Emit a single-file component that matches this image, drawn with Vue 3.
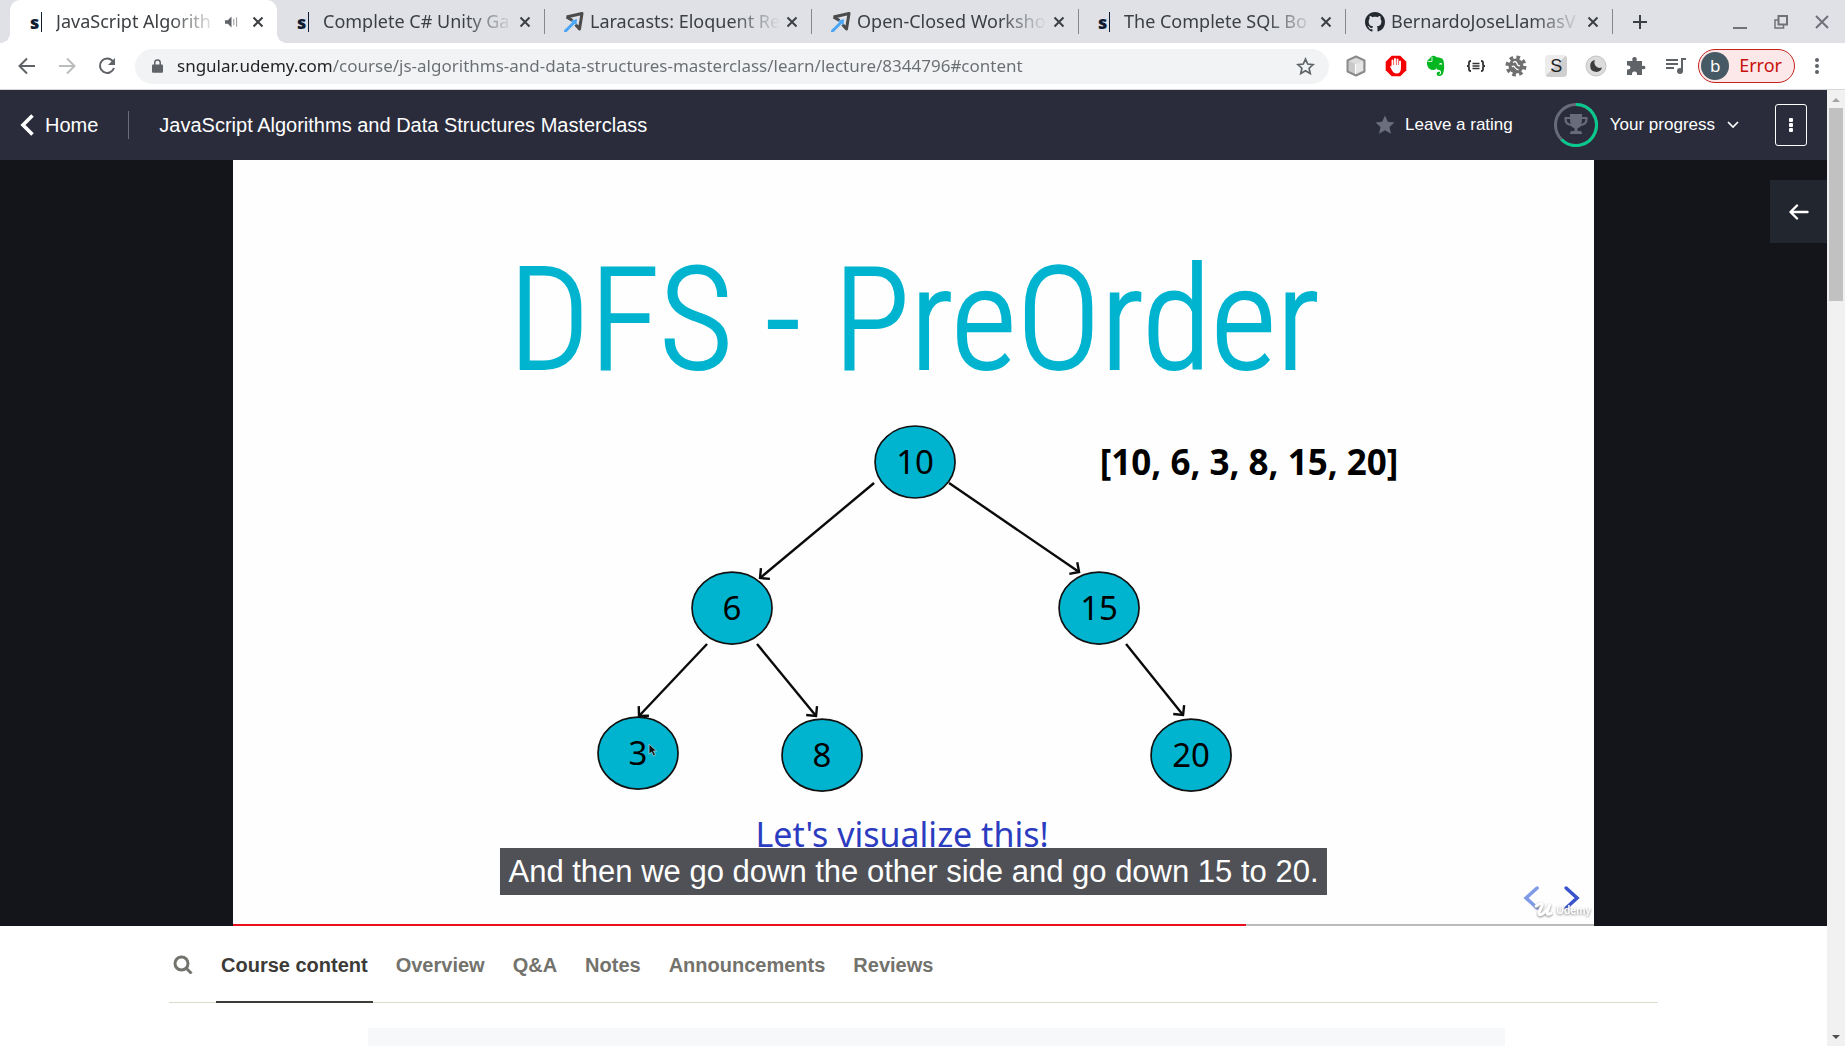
<script setup>
import { ref } from 'vue'

const browserTabs = [
  { title: 'JavaScript Algorith', icon: 'sngular', active: true, audio: true },
  { title: 'Complete C# Unity Ga', icon: 'sngular' },
  { title: 'Laracasts: Eloquent Re', icon: 'laracasts' },
  { title: 'Open-Closed Worksho', icon: 'laracasts' },
  { title: 'The Complete SQL Bo', icon: 'sngular' },
  { title: 'BernardoJoseLlamasV', icon: 'github' },
]

const url = ref('sngular.udemy.com/course/js-algorithms-and-data-structures-masterclass/learn/lecture/8344796#content')

const nodes = [
  { value: 10, x: 682, y: 302 },
  { value: 6, x: 499, y: 448 },
  { value: 15, x: 866, y: 448 },
  { value: 3, x: 405, y: 593 },
  { value: 8, x: 589, y: 595 },
  { value: 20, x: 958, y: 595 },
]

const edges = [
  [641, 323, 527, 418],
  [716, 323, 846, 412],
  [474, 484, 406, 556],
  [524, 484, 583, 556],
  [893, 484, 950, 555],
]

const sections = ['Course content', 'Overview', 'Q&A', 'Notes', 'Announcements', 'Reviews']
const current = ref('Course content')
const progress = 74.4
</script>

<template>
  <div class="browser">
    <header class="tab-strip">
      <div v-for="tab in browserTabs" :key="tab.title" class="tab" :class="{ active: tab.active }">
        <span v-if="tab.icon === 'sngular'" class="fav sngular">s</span>
        <svg v-else-if="tab.icon === 'laracasts'" class="fav" viewBox="0 0 20 20">
          <path d="M2.500 5 18 1.500 15.500 17 11.500 12.500M2.500 5 8.500 8.500" fill="none" stroke="#4b4b4b" stroke-width="3" stroke-linejoin="round" />
          <path d="M13 7 12.500 13 6.500 9z" fill="#4aa5f5" />
          <path d="M9 11.500 1.500 19" stroke="#4aa5f5" stroke-width="3" stroke-dasharray="6 2" stroke-linecap="round" />
        </svg>
        <svg v-else class="fav" viewBox="0 0 16 16">
          <path fill="#24292f" d="M8 0C3.580 0 0 3.580 0 8c0 3.540 2.290 6.530 5.470 7.590.4.070.550-.17.550-.38 0-.19-.01-.82-.01-1.490-2.010.37-2.530-.49-2.690-.94-.09-.23-.48-.94-.82-1.130-.28-.15-.68-.52-.01-.53.630-.01 1.080.580 1.230.820.720 1.210 1.870.870 2.330.660.070-.52.280-.87.510-1.070-1.780-.2-3.640-.89-3.640-3.950 0-.87.310-1.590.820-2.150-.08-.2-.36-1.020.080-2.120 0 0 .67-.21 2.200.820.640-.18 1.320-.27 2-.27s1.360.090 2 .27c1.530-1.040 2.200-.82 2.200-.82.440 1.100.160 1.920.080 2.120.510.560.820 1.270.820 2.150 0 3.070-1.870 3.750-3.650 3.950.290.250.540.730.540 1.480 0 1.070-.01 1.930-.01 2.200 0 .21.150.460.550.380A8.010 8.010 0 0 0 16 8c0-4.420-3.580-8-8-8z" />
        </svg>
        <span class="tab-title">{{ tab.title }}</span>
        <svg v-if="tab.audio" class="audio" viewBox="0 0 14 14">
          <path d="M0 5h3l4-4v12L3 9H0z" fill="#5f6368" />
          <path d="M9.500 3.500v7M12.500 2v10" stroke="#8b8e92" stroke-width="1" />
        </svg>
        <button class="tab-close" aria-label="Close tab">
          <svg viewBox="0 0 12 12"><path d="M1.500 1.500l9 9M10.500 1.500l-9 9" stroke="#3c4043" stroke-width="2" /></svg>
        </button>
      </div>
      <button class="new-tab" aria-label="New tab">
        <svg viewBox="0 0 16 16"><path d="M8 1v14M1 8h14" stroke="#3c4043" stroke-width="2" /></svg>
      </button>
      <div class="window-controls">
        <button aria-label="Minimize"><svg viewBox="0 0 16 16"><path d="M1 14h14" stroke="#707278" stroke-width="2" /></svg></button>
        <button aria-label="Restore"><svg viewBox="0 0 16 16" fill="none" stroke="#707278" stroke-width="2"><path d="M5.500 2h8.500v8.500H5.500z" /><path d="M5.500 6H2v8h8.500v-3.500" stroke-width="1.500" /></svg></button>
        <button aria-label="Close"><svg viewBox="0 0 16 16"><path d="M2 2l12 12M14 2L2 14" stroke="#707278" stroke-width="2" /></svg></button>
      </div>
    </header>

    <div class="toolbar">
      <div class="nav-buttons">
        <button aria-label="Back"><svg viewBox="0 0 18 18" fill="none" stroke="#5f6368" stroke-width="2"><path d="M17 9H2M9 1.500 1.500 9 9 16.500" /></svg></button>
        <button aria-label="Forward"><svg viewBox="0 0 18 18" fill="none" stroke="#babcbe" stroke-width="2"><path d="M1 9h15M9 1.500 16.500 9 9 16.500" /></svg></button>
        <button aria-label="Reload"><svg viewBox="0 0 18 18"><path d="M15 4.500A7.200 7.200 0 1 0 16 11" fill="none" stroke="#5f6368" stroke-width="2" /><path d="M17 1v7h-7z" fill="#5f6368" /></svg></button>
      </div>
      <div class="omnibox">
        <svg class="lock" viewBox="0 0 12 16"><path d="M1 6h10a1 1 0 0 1 1 1v7a1 1 0 0 1-1 1H1a1 1 0 0 1-1-1V7a1 1 0 0 1 1-1z" fill="#5f6368" /><path d="M3 7V4a3 3 0 0 1 6 0v3" fill="none" stroke="#5f6368" stroke-width="1.600" /></svg>
        <input v-model="url" class="url" type="text" aria-label="Address" spellcheck="false" />
        <button class="bookmark" aria-label="Bookmark">
          <svg viewBox="0 0 18 18"><path d="M9 2l2.100 4.700 5.100.5-3.800 3.400 1.100 5L9 13l-4.500 2.600 1.100-5L1.800 7.200l5.100-.5z" fill="none" stroke="#5f6368" stroke-width="1.600" /></svg>
        </button>
      </div>
      <div class="extensions">
        <button aria-label="Cube"><svg viewBox="0 0 22 22"><path d="M11 1.500 19.500 5.500v11L11 20.500 2.500 16.500v-11z" fill="#c9c9c9" stroke="#8b8b8b" stroke-width="2" stroke-linejoin="round" /><path d="M10.500 9 18 6v9.500l-7.500 3.500z" fill="#e6e6e6" /><path d="M4 6 11 3l7 3-7.500 3z" fill="#dcdcdc" /><path d="M10.500 9v10" stroke="#fff" /></svg></button>
        <button aria-label="Ad blocker"><svg viewBox="0 0 22 22"><path d="M6.700.700h8.600l6 6v8.600l-6 6H6.700l-6-6V6.700z" fill="#f40000" /><path d="M7.500 11V5.500M10 10V4M12.500 10V4.500M15 11V6.500" stroke="#fff" stroke-width="1.900" stroke-linecap="round" /><path d="M6.600 10h9.300v3.500c0 3-1.500 5-4.200 5-2.500 0-4-1.500-5-3.800L5 11.500q.8-1 1.600.2z" fill="#fff" /></svg></button>
        <button aria-label="Evernote"><svg viewBox="0 0 22 22"><path d="M2 6 7 1q3-1 4 1l4 .7q3 .5 3.500 3 1.500 7-.2 12-1 3.300-4 3.300c-3 0-3.500-3.800-1-4.300h1.700v2h-1q-.6.700.2.800c1.500.1 2-1.200 1.800-2.700-.2-1.500-2-2-4-2.300l-.6-1.500q-.6 2.200-3 2Q3 15 2 9z" fill="#04b61f" /><path d="M2.500 6.500H7V2" fill="none" stroke="#fff" stroke-width=".8" /><path d="M14.500 9.500q1-1.800 2.500-.1" fill="none" stroke="#fff" stroke-width="1.200" /></svg></button>
        <button aria-label="JSON"><svg viewBox="0 0 22 22" fill="none" stroke="#333" stroke-width="1.800"><path d="M6 6Q3.500 6 4 8.500T2 11q2.500 0 2 2.500T6 16M16 6q2.500 0 2 2.500t2 2.500q-2.500 0-2 2.500T16 16" /><path d="M7.500 8.500h7M7.500 11h7M7.500 13.500h7" stroke-width="1.300" /></svg></button>
        <button aria-label="Gear"><svg viewBox="0 0 22 22"><circle cx="11" cy="11" r="8.500" fill="none" stroke="#707070" stroke-width="4" stroke-dasharray="3.500 3.200" /><circle cx="11" cy="11" r="7.500" fill="#707070" /><path d="M8 7.500q3-2 4 1t3 2M7 12q1.500-2 3 .5t3.500 2" fill="none" stroke="#fff" stroke-width="1.300" /></svg></button>
        <button class="s-ext" aria-label="Stylish"><span>S</span></button>
        <button aria-label="Dark mode"><svg viewBox="0 0 22 22"><circle cx="11" cy="11" r="10" fill="#dcdcdc" stroke="#c4c4c4" /><path d="M10 5a6 6 0 1 0 7 7.500A5.500 5.500 0 0 1 10 5z" fill="#3c3c3c" /></svg></button>
        <button aria-label="Extensions"><svg viewBox="0 0 22 22"><path d="M2 6h5.500q-1-4 2-4t2 4H17v5q3.500-1 3.500 1.500T17 14v6h-5q.5-3.500-2.500-3.500T7 20H2v-5.500q3.500.5 3.500-2T2 10.500z" fill="#5f6368" /></svg></button>
        <button aria-label="Media"><svg viewBox="0 0 22 22"><path d="M1 5h12M1 9h12M1 13h8" stroke="#5f6368" stroke-width="2" /><path d="M17 16V4h4" fill="none" stroke="#5f6368" stroke-width="2" /><circle cx="15" cy="16" r="3" fill="#5f6368" /></svg></button>
      </div>
      <button class="profile"><span class="avatar">b</span><span class="profile-label">Error</span></button>
      <button class="browser-menu" aria-label="Browser menu"><svg viewBox="0 0 4 18" fill="#5f6368"><circle cx="2" cy="3" r="2" /><circle cx="2" cy="9" r="2" /><circle cx="2" cy="15" r="2" /></svg></button>
    </div>

    <div class="viewport">
      <main class="page">
        <header class="course-header">
          <a class="home" href="#home">
            <svg viewBox="0 0 14 22"><path d="M12.500 1.500 3 11l9.500 9.500" fill="none" stroke="#fff" stroke-width="3.600" /></svg>
            <span>Home</span>
          </a>
          <a class="course-title" href="#course">JavaScript Algorithms and Data Structures Masterclass</a>
          <button class="rating">
            <svg viewBox="0 0 20 20"><path d="M10 .5l2.800 6.300 6.700.7-5 4.500 1.500 6.800L10 15.300l-6 3.500L5.500 12l-5-4.500 6.700-.7z" fill="#6b6e7c" /></svg>
            <span>Leave a rating</span>
          </button>
          <button class="progress">
            <svg class="ring" viewBox="0 0 44 44">
              <circle cx="22" cy="22" r="20.500" fill="none" stroke="#686b79" stroke-width="3" />
              <path d="M22 1.500A20.500 20.500 0 1 1 7.500 36.500" fill="none" stroke="#08c98c" stroke-width="3" />
              <path d="M16 11h12v3h5.500v3q0 5-6.500 6-1.500 2-3.500 2.300V28h2.500q2 0 2 3H16q0-3 2-3h2.500v-2.700Q18.500 25 17 23q-6.500-1-6.500-6v-3H16z" fill="#686b79" />
              <path d="M12.500 16H16q0 3 .8 5-4.300-1.200-4.300-5zM31.500 16H28q0 3-.8 5 4.300-1.200 4.300-5z" fill="#2a2c3c" />
            </svg>
            <span>Your progress</span>
            <svg class="caret" viewBox="0 0 12 8"><path d="M1 1l5 5 5-5" fill="none" stroke="#fff" stroke-width="1.700" /></svg>
          </button>
          <button class="more" aria-label="More options">
            <svg viewBox="0 0 6 16" fill="#fff"><rect x="1" y="1" width="4" height="4" rx="1" /><rect x="1" y="6" width="4" height="4" rx="1" /><rect x="1" y="11" width="4" height="4" rx="1" /></svg>
          </button>
        </header>

        <section class="stage">
          <div class="video">
            <svg class="slide" viewBox="0 0 1361 766">
              <defs>
                <marker id="head" viewBox="-10 -10 12 20" refX="0" refY="0" markerWidth="12" markerHeight="20" markerUnits="userSpaceOnUse" orient="auto">
                  <path d="M-7 -7 0 0-7 7" fill="none" stroke="#0b0b0b" stroke-width="2.400" />
                </marker>
              </defs>
              <text class="slide-title" x="681" y="209">DFS - PreOrder</text>
              <text class="slide-list" x="1016" y="315">[10, 6, 3, 8, 15, 20]</text>
              <line v-for="e in edges" :key="e.join()" :x1="e[0]" :y1="e[1]" :x2="e[2]" :y2="e[3]" stroke="#0b0b0b" stroke-width="2.400" marker-end="url(#head)" />
              <g v-for="n in nodes" :key="n.value">
                <ellipse :cx="n.x" :cy="n.y" rx="40" ry="36" fill="#00b4d0" stroke="#111" stroke-width="1.700" />
                <text class="slide-node" :x="n.x" :y="n.y + 12">{{ n.value }}</text>
              </g>
              <path d="M416 584v10l2.500-2 2 4 2-1-2-4h3z" fill="#111" stroke="#b9dfe8" stroke-width=".7" />
              <text class="slide-note" x="669" y="687">Let's visualize this!</text>
              <path d="M1304 728l-11 10 11 10" fill="none" stroke="#7f9be6" stroke-width="3.500" stroke-linecap="round" />
              <path d="M1333 728l11 10-11 10" fill="none" stroke="#3853cc" stroke-width="3.500" stroke-linecap="round" />
              <g class="watermark">
                <path d="M1303 746q7-5 6 0l-3 6q-1 4 3 2 5-3 8-10l-3 8q0 4 4 1" fill="none" stroke="#fff" stroke-width="3" stroke-linecap="round" />
                <text x="1323" y="754">Udemy</text>
              </g>
            </svg>
            <p class="caption">And then we go down the other side and go down 15 to 20.</p>
            <div class="timeline"><div class="played" :style="{ width: progress + '%' }"></div></div>
          </div>
          <button class="open-sidebar" aria-label="Open course content">
            <svg viewBox="0 0 20 16"><path d="M18.500 8H2.500M8 1.500 1.500 8 8 14.500" fill="none" stroke="#fff" stroke-width="2.400" stroke-linecap="round" stroke-linejoin="round" /></svg>
          </button>
        </section>

        <section class="dashboard">
          <nav class="sections">
            <button class="search" aria-label="Search course">
              <svg viewBox="0 0 20 20" fill="none" stroke="#73726c" stroke-width="3"><circle cx="8.500" cy="9.500" r="6.500" /><path d="M13 14l5.500 5.500" /></svg>
            </button>
            <a v-for="s in sections" :key="s" href="#content" :class="{ current: s === current }" @click.prevent="current = s">{{ s }}</a>
          </nav>
          <div class="panel"></div>
        </section>
      </main>
      <div class="scrollbar">
        <svg viewBox="0 0 8 4"><path d="M0 4 4 0l4 4z" fill="#a3a3a3" /></svg>
        <div class="track"><div class="thumb"></div></div>
        <svg viewBox="0 0 8 4"><path d="M0 0h8L4 4z" fill="#505050" /></svg>
      </div>
    </div>
  </div>
</template>

<style>
body {
  overflow: hidden;
}
</style>

<style scoped>
.browser,
.browser * {
  box-sizing: border-box;
}
.browser {
  display: flex;
  flex-direction: column;
  height: 100vh;
  background: #fff;
  font-family: "Noto Sans", "Open Sans", sans-serif;
  color: #3c4043;
}
button {
  display: flex;
  align-items: center;
  justify-content: center;
  padding: 0;
  border: 0;
  background: none;
  color: inherit;
  font: inherit;
  cursor: pointer;
}
a {
  color: inherit;
  text-decoration: none;
}
svg {
  display: block;
  flex: none;
}

/* tab strip */
.tab-strip {
  display: flex;
  align-items: stretch;
  height: 43px;
  padding-left: 10px;
  background: #dfe1e6;
  font-size: 18px;
}
.tab {
  position: relative;
  display: flex;
  flex: 0 1 267px;
  align-items: center;
  gap: 6px;
  min-width: 0;
  padding: 0 13px 0 20px;
}
.tab:not(.active)::after {
  content: "";
  position: absolute;
  right: -1px;
  width: 1px;
  height: 25px;
  background: #85878c;
}
.tab.active {
  border-radius: 10px 10px 0 0;
  background: #fff;
}
.tab.active::before,
.tab.active::after {
  content: "";
  position: absolute;
  bottom: 0;
  width: 10px;
  height: 10px;
}
.tab.active::before {
  left: -10px;
  background: radial-gradient(circle at 0 0, transparent 10px, #fff 10px);
}
.tab.active::after {
  right: -10px;
  background: radial-gradient(circle at 100% 0, transparent 10px, #fff 10px);
}
.fav {
  flex: none;
  width: 20px;
  height: 20px;
}
.sngular {
  display: flex;
  align-items: center;
  color: #0e1c33;
  font: 900 18px/20px "Noto Sans", "Open Sans", sans-serif;
}
.sngular::after {
  content: "";
  width: 1px;
  height: 20px;
  margin-left: 2px;
  background: #0e1c33;
}
.tab-title {
  flex: 1;
  min-width: 0;
  padding-bottom: 2px;
  white-space: nowrap;
  -webkit-mask-image: linear-gradient(to right, #000 calc(100% - 48px), transparent);
  mask-image: linear-gradient(to right, #000 calc(100% - 48px), transparent);
}
.audio {
  width: 13px;
  height: 14px;
  margin: 0 8px 0 1px;
}
.tab-close,
.tab-close svg {
  width: 12px;
  height: 12px;
}
.new-tab {
  width: 56px;
}
.new-tab svg {
  width: 16px;
}
.window-controls {
  display: flex;
  gap: 25px;
  margin-left: auto;
  padding-right: 15px;
}
.window-controls svg {
  width: 16px;
}

/* toolbar */
.toolbar {
  display: flex;
  align-items: center;
  height: 47px;
  padding: 0 17px 0 18px;
  border-bottom: 1px solid #d5d7dc;
  background: #fff;
}
.nav-buttons {
  display: flex;
  gap: 22px;
  margin-right: 19px;
}
.nav-buttons svg {
  width: 18px;
}
.omnibox {
  display: flex;
  flex: 1;
  align-items: center;
  height: 35px;
  padding: 0 14px 0 17px;
  border-radius: 18px;
  background: #f1f3f4;
}
.lock {
  width: 11px;
}
.url {
  flex: 1;
  min-width: 0;
  margin-left: 14px;
  padding: 0 0 2px;
  border: 0;
  outline: 0;
  background: linear-gradient(to right, #202124 156px, #6a6d71 156px);
  -webkit-background-clip: text;
  background-clip: text;
  -webkit-text-fill-color: transparent;
  font: inherit;
  font-size: 17px;
}
.bookmark svg {
  width: 19px;
}
.extensions {
  display: flex;
  gap: 18px;
  margin-left: 16px;
}
.extensions svg,
.s-ext {
  width: 22px;
  height: 22px;
}
.s-ext {
  border-radius: 4px;
  background: linear-gradient(135deg, #ececec 50%, #cfcfcf 50%);
  color: #222;
  font: 18px/22px "Liberation Sans", sans-serif;
}
.profile {
  gap: 10px;
  height: 34px;
  margin-left: 11px;
  padding: 0 12px 0 2px;
  border: 1px solid #c5221f;
  border-radius: 17px;
  background: #fce8e8;
  color: #c9100c;
  font-size: 18px;
}
.profile-label {
  padding-bottom: 2px;
}
.avatar {
  width: 28px;
  height: 28px;
  border-radius: 50%;
  background: #455a64;
  color: #fff;
  font-size: 17px;
  line-height: 27px;
}
.browser-menu {
  width: 22px;
  margin-left: 11px;
}
.browser-menu svg {
  width: 4px;
}

/* page area */
.viewport {
  display: flex;
  flex: 1;
  min-height: 0;
}
.page {
  flex: 1;
  min-width: 0;
  overflow: hidden;
  font-family: "Liberation Sans", Arial, sans-serif;
}
.scrollbar {
  display: flex;
  flex-direction: column;
  align-items: center;
  gap: 6px;
  width: 18px;
  padding: 8px 0 7px;
  background: #f1f1f1;
}
.scrollbar svg {
  width: 8px;
}
.track {
  flex: 1;
  width: 14px;
}
.thumb {
  height: 21%;
  background: #c1c1c1;
}

/* course header */
.course-header {
  display: flex;
  align-items: center;
  height: 70px;
  padding: 0 20px;
  background: #2a2c3c;
  color: #fff;
  font-size: 17px;
}
.home {
  display: flex;
  align-items: center;
  gap: 11px;
  height: 28px;
  padding-right: 30px;
  border-right: 1px solid #686b79;
  font-size: 20px;
}
.home svg {
  width: 14px;
}
.course-title {
  margin-left: 30px;
  font-size: 20px;
}
.rating {
  gap: 10px;
  margin-left: auto;
}
.rating svg {
  width: 20px;
}
.progress {
  gap: 12px;
  margin-left: 41px;
}
.ring {
  width: 44px;
}
.caret {
  width: 12px;
}
.more {
  width: 32px;
  height: 42px;
  margin-left: 36px;
  border: 1px solid #fff;
  border-radius: 3px;
}
.more svg {
  width: 6px;
}

/* lecture video */
.stage {
  position: relative;
  display: flex;
  justify-content: center;
  background: #14151a;
}
.video {
  position: relative;
  width: 74.500%;
  background: #fefefe;
}
.slide {
  width: 100%;
  height: auto;
}
.slide text {
  font-family: "Noto Sans", "Open Sans", sans-serif;
}
.slide .slide-title {
  fill: #00b4d0;
  stroke: #00b4d0;
  stroke-width: 2px;
  font-family: "Roboto Condensed", Roboto, sans-serif;
  font-size: 142px;
  font-weight: 300;
  text-anchor: middle;
}
.slide-list {
  font-size: 35px;
  font-weight: 700;
  text-anchor: middle;
}
.slide-node {
  font-size: 33px;
  text-anchor: middle;
}
.slide-note {
  fill: #2c3cc0;
  font-size: 34px;
  text-anchor: middle;
}
.watermark {
  filter: drop-shadow(0 1px 1px #888);
}
.slide .watermark text {
  fill: #fff;
  font-family: Lato, sans-serif;
  font-size: 11px;
  font-weight: 700;
}
.caption {
  position: absolute;
  bottom: 31px;
  left: 50%;
  margin: 0;
  padding: 0 8px;
  transform: translateX(-50%);
  background: #505157;
  color: #fff;
  font-size: 31px;
  line-height: 47px;
  white-space: nowrap;
}
.timeline {
  position: absolute;
  right: 0;
  bottom: 0;
  left: 0;
  height: 2px;
  background: #bcbcbc;
}
.played {
  height: 2px;
  background: #ea0f1c;
}
.open-sidebar {
  position: absolute;
  top: 20px;
  right: 0;
  width: 57px;
  height: 63px;
  background: #22262f;
}
.open-sidebar svg {
  width: 20px;
}

/* course dashboard */
.sections {
  display: flex;
  align-items: stretch;
  gap: 18px;
  height: 77px;
  margin: 0 169px;
  border-bottom: 1px solid #dcdacb;
  color: #73726c;
  font-size: 20px;
  font-weight: 700;
  line-height: 78px;
}
.sections a {
  padding: 0 5px;
}
.sections a.current {
  height: 77px;
  border-bottom: 2px solid #3c3b37;
  color: #3c3b37;
}
.search {
  margin: 0 5px 0 4px;
}
.search svg {
  width: 20px;
}
.panel {
  height: 120px;
  margin: 25px 322px 0 368px;
  background: #f7f8fa;
}
</style>
